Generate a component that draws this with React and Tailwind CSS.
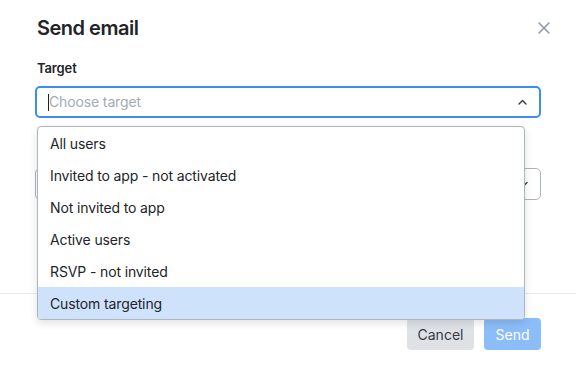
import React from 'react';

const options = [
  'All users',
  'Invited to app - not activated',
  'Not invited to app',
  'Active users',
  'RSVP - not invited',
  'Custom targeting',
];

const App = () => {
  return (
    <div className="relative w-[576px] h-[370px] overflow-hidden bg-white text-[#212529]" style={{ fontFamily: 'Inter, "Noto Sans", sans-serif' }}>
      {/* header */}
      <div className="flex items-center justify-between pl-[37px] pr-[26px] pt-[14px]">
        <h2 className="text-[20px] leading-[28px] font-semibold tracking-[-0.5px]">Send email</h2>
        <button className="w-[12px] h-[12px] flex items-center justify-center">
          <svg width="12" height="12" viewBox="0 0 12 12" fill="none" stroke="#8f9ba7" strokeWidth="1.6" strokeLinecap="round">
            <path d="M1 1L11 11M11 1L1 11" />
          </svg>
        </button>
      </div>

      {/* body */}
      <div className="h-[251px] px-[35px] pt-[16px] tracking-[-0.13px]">
        <label className="block pl-[2px] text-[13px] leading-[20px] font-semibold">Target</label>
        <div className="relative mt-[8px]">
          <div className="flex items-center h-[32px] w-[506px] border-2 border-[#3d8bf7] rounded-[5px] pl-[11px] pr-[12px]">
            <span className="w-[1px] h-[17px] bg-[#222]" />
            <span className="flex-1 text-[14px] text-[#a3abb3] leading-[20px]">Choose target</span>
            <svg width="9" height="6" viewBox="0 0 9 6" fill="none" stroke="#343a40" strokeWidth="1.4" strokeLinecap="round" strokeLinejoin="round">
              <path d="M1 5L4.5 1.5L8 5" />
            </svg>
          </div>

          {/* dropdown menu */}
          <div className="absolute left-[2px] top-[40px] z-10 w-[488px] bg-white border border-[#adb5bd] rounded-[4px] shadow-[0_3px_8px_rgba(0,0,0,0.12)] overflow-hidden">
            {options.map((o, i) => (
              <div
                key={o}
                className={`h-[32px] flex items-center px-[12px] text-[14px] ${i === options.length - 1 ? 'bg-[#cfe2fc]' : ''}`}
              >
                {o}
              </div>
            ))}
          </div>
        </div>

        <div className="mt-[50px] flex items-center justify-end h-[32px] w-[506px] border border-[#adb5bd] rounded-[5px] pr-[12px]">
          <svg width="9" height="6" viewBox="0 0 9 6" fill="none" stroke="#343a40" strokeWidth="1.4" strokeLinecap="round" strokeLinejoin="round">
            <path d="M1 1.5L4.5 5L8 1.5" />
          </svg>
        </div>
      </div>

      {/* footer */}
      <div className="border-t border-[#e9ecef] pt-[24px] pr-[35px] flex justify-end gap-[10px]">
        <button className="h-[32px] w-[67px] rounded-[4px] bg-[#dee2e6] text-[14px] text-[#343a40]">Cancel</button>
        <button className="h-[32px] w-[57px] rounded-[4px] bg-[#8bbdf9] text-[14px] text-white">Send</button>
      </div>
    </div>
  );
};

export default App;
